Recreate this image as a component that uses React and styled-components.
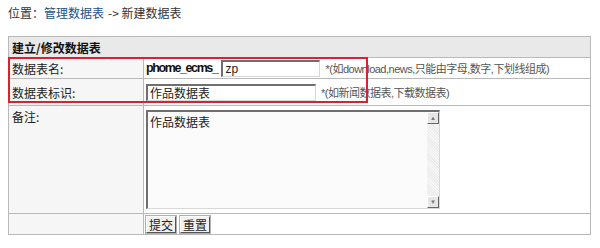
import React from "react";
import styled, { createGlobalStyle } from "styled-components";

const GlobalStyle = createGlobalStyle`
  body {
    margin: 0;
    background: #fff;
    font-family: "Liberation Sans", "Noto Sans CJK SC", sans-serif;
    font-size: 12px;
    color: #222;
  }
`;

const Page = styled.div`
  position: relative;
  width: 600px;
  height: 248px;
  padding: 0 8px;
  box-sizing: border-box;
`;

const Crumb = styled.div`
  height: 36px;
  padding-top: 5px;
  box-sizing: border-box;
  font-size: 12px;
  color: #333;
  font-family: "Noto Sans CJK SC", sans-serif;
  line-height: 16px;
`;

const CrumbLink = styled.a`
  color: #1d4f86;
  text-decoration: none;
  margin: 0 4px 0 0;
`;

const Table = styled.table`
  width: 583px;
  table-layout: fixed;
  border-collapse: collapse;
  border: 1px solid #b9b9b9;
`;

const HeadCell = styled.td`
  height: 20px;
  padding: 0 3px;
  background: #e9e9e9;
  font-weight: bold;
  font-family: "Noto Sans CJK SC", sans-serif;
  font-size: 12px;
  color: #111;
  border-bottom: 1px solid #b9b9b9;
`;

const LabelCell = styled.td`
  height: ${(p) => p.$h}px;
  padding: ${(p) => (p.$top ? "2px 3px 0" : "0 3px")};
  vertical-align: ${(p) => (p.$top ? "top" : "middle")};
  background: #f6f6f6;
  border: 1px solid #b9b9b9;
  font-family: "Noto Sans CJK SC", sans-serif;
  color: #222;
`;

const ValueCell = styled.td`
  padding: 0 2px;
  background: #fff;
  border: 1px solid #b9b9b9;
  white-space: nowrap;
  overflow: hidden;
  vertical-align: ${(p) => (p.$top ? "top" : "middle")};
`;

const Prefix = styled.span`
  font-weight: bold;
  font-size: 12.5px;
  letter-spacing: -1.4px;
  color: #111;
  font-family: "Liberation Sans", sans-serif;
  margin-right: 4px;
  vertical-align: middle;
`;

const TextInput = styled.input`
  width: ${(p) => p.$w}px;
  height: 17px;
  box-sizing: border-box;
  padding: 0 2px;
  border-top: 2px solid #6f6f6f;
  border-left: 2px solid #6f6f6f;
  border-right: 1px solid #d8d8d8;
  border-bottom: 1px solid #d8d8d8;
  font-size: 12px;
  font-family: "Liberation Sans", "Noto Sans CJK SC", sans-serif;
  color: #222;
  vertical-align: middle;
  outline: none;
`;

const Hint = styled.span`
  margin-left: 5px;
  color: #555;
  font-size: 11px;
  font-family: "Liberation Sans", "Noto Sans CJK SC", sans-serif;
  letter-spacing: -0.5px;
  vertical-align: middle;
`;

const MemoBox = styled.div`
  display: flex;
  width: 294px;
  height: 99px;
  box-sizing: border-box;
  margin: 4px 0 4px;
  border-top: 2px solid #6f6f6f;
  border-left: 2px solid #6f6f6f;
  border-right: 1px solid #d8d8d8;
  border-bottom: 1px solid #d8d8d8;
  background: #fbfbfb;
`;

const Memo = styled.textarea`
  flex: 1;
  min-width: 0;
  padding: 1px 2px;
  border: none;
  resize: none;
  background: transparent;
  font-size: 12px;
  font-family: "Noto Sans CJK SC", sans-serif;
  color: #222;
  outline: none;
`;

const ScrollBar = styled.div`
  width: 12px;
  display: flex;
  flex-direction: column;
  justify-content: space-between;
  background: repeating-linear-gradient(45deg, #ececec 0 1px, #f6f6f6 1px 2px);
`;

const ScrollArrow = styled.div`
  height: 12px;
  box-sizing: border-box;
  background: #e6e6e6;
  border-top: 1px solid #fff;
  border-left: 1px solid #fff;
  border-right: 1px solid #666;
  border-bottom: 1px solid #666;
  display: flex;
  align-items: center;
  justify-content: center;
  font-size: 6px;
  line-height: 1;
  color: #777;
`;

const Btn = styled.button`
  height: 17px;
  padding: 0 2px;
  margin-right: 4px;
  background: #f1f1f1;
  border-top: 1px solid #fff;
  border-left: 1px solid #fff;
  border-right: 1px solid #555;
  border-bottom: 1px solid #555;
  box-shadow: 0 0 0 1px #b0b0b0;
  font-size: 12px;
  font-family: "Noto Sans CJK SC", sans-serif;
  color: #222;
  line-height: 13px;
  vertical-align: middle;
`;

const Mark = styled.div`
  position: absolute;
  left: 8px;
  top: 57px;
  width: 360px;
  height: 46px;
  border: 2px solid #d5242b;
  box-sizing: border-box;
  pointer-events: none;
`;

export default function App() {
  return (
    <>
      <GlobalStyle />
      <Page>
        <Crumb>
          位置：<CrumbLink href="#">管理数据表</CrumbLink>-&gt; 新建数据表
        </Crumb>
        <Table>
          <colgroup>
            <col style={{ width: 135 }} />
            <col />
          </colgroup>
          <tbody>
            <tr>
              <HeadCell colSpan={2}>建立/修改数据表</HeadCell>
            </tr>
            <tr>
              <LabelCell $h={20}>数据表名:</LabelCell>
              <ValueCell>
                <Prefix>phome_ecms_</Prefix>
                <TextInput $w={99} defaultValue="zp" />
                <Hint>*(如download,news,只能由字母,数字,下划线组成)</Hint>
              </ValueCell>
            </tr>
            <tr>
              <LabelCell $h={26}>数据表标识:</LabelCell>
              <ValueCell>
                <TextInput $w={170} defaultValue="作品数据表" />
                <Hint>*(如新闻数据表,下载数据表)</Hint>
              </ValueCell>
            </tr>
            <tr>
              <LabelCell $h={103} $top>
                备注:
              </LabelCell>
              <ValueCell $top>
                <MemoBox>
                  <Memo defaultValue="作品数据表" />
                  <ScrollBar>
                    <ScrollArrow>▲</ScrollArrow>
                    <ScrollArrow>▼</ScrollArrow>
                  </ScrollBar>
                </MemoBox>
              </ValueCell>
            </tr>
            <tr>
              <LabelCell $h={20} />
              <ValueCell>
                <Btn>提交</Btn>
                <Btn>重置</Btn>
              </ValueCell>
            </tr>
          </tbody>
        </Table>
        <Mark />
      </Page>
    </>
  );
}
